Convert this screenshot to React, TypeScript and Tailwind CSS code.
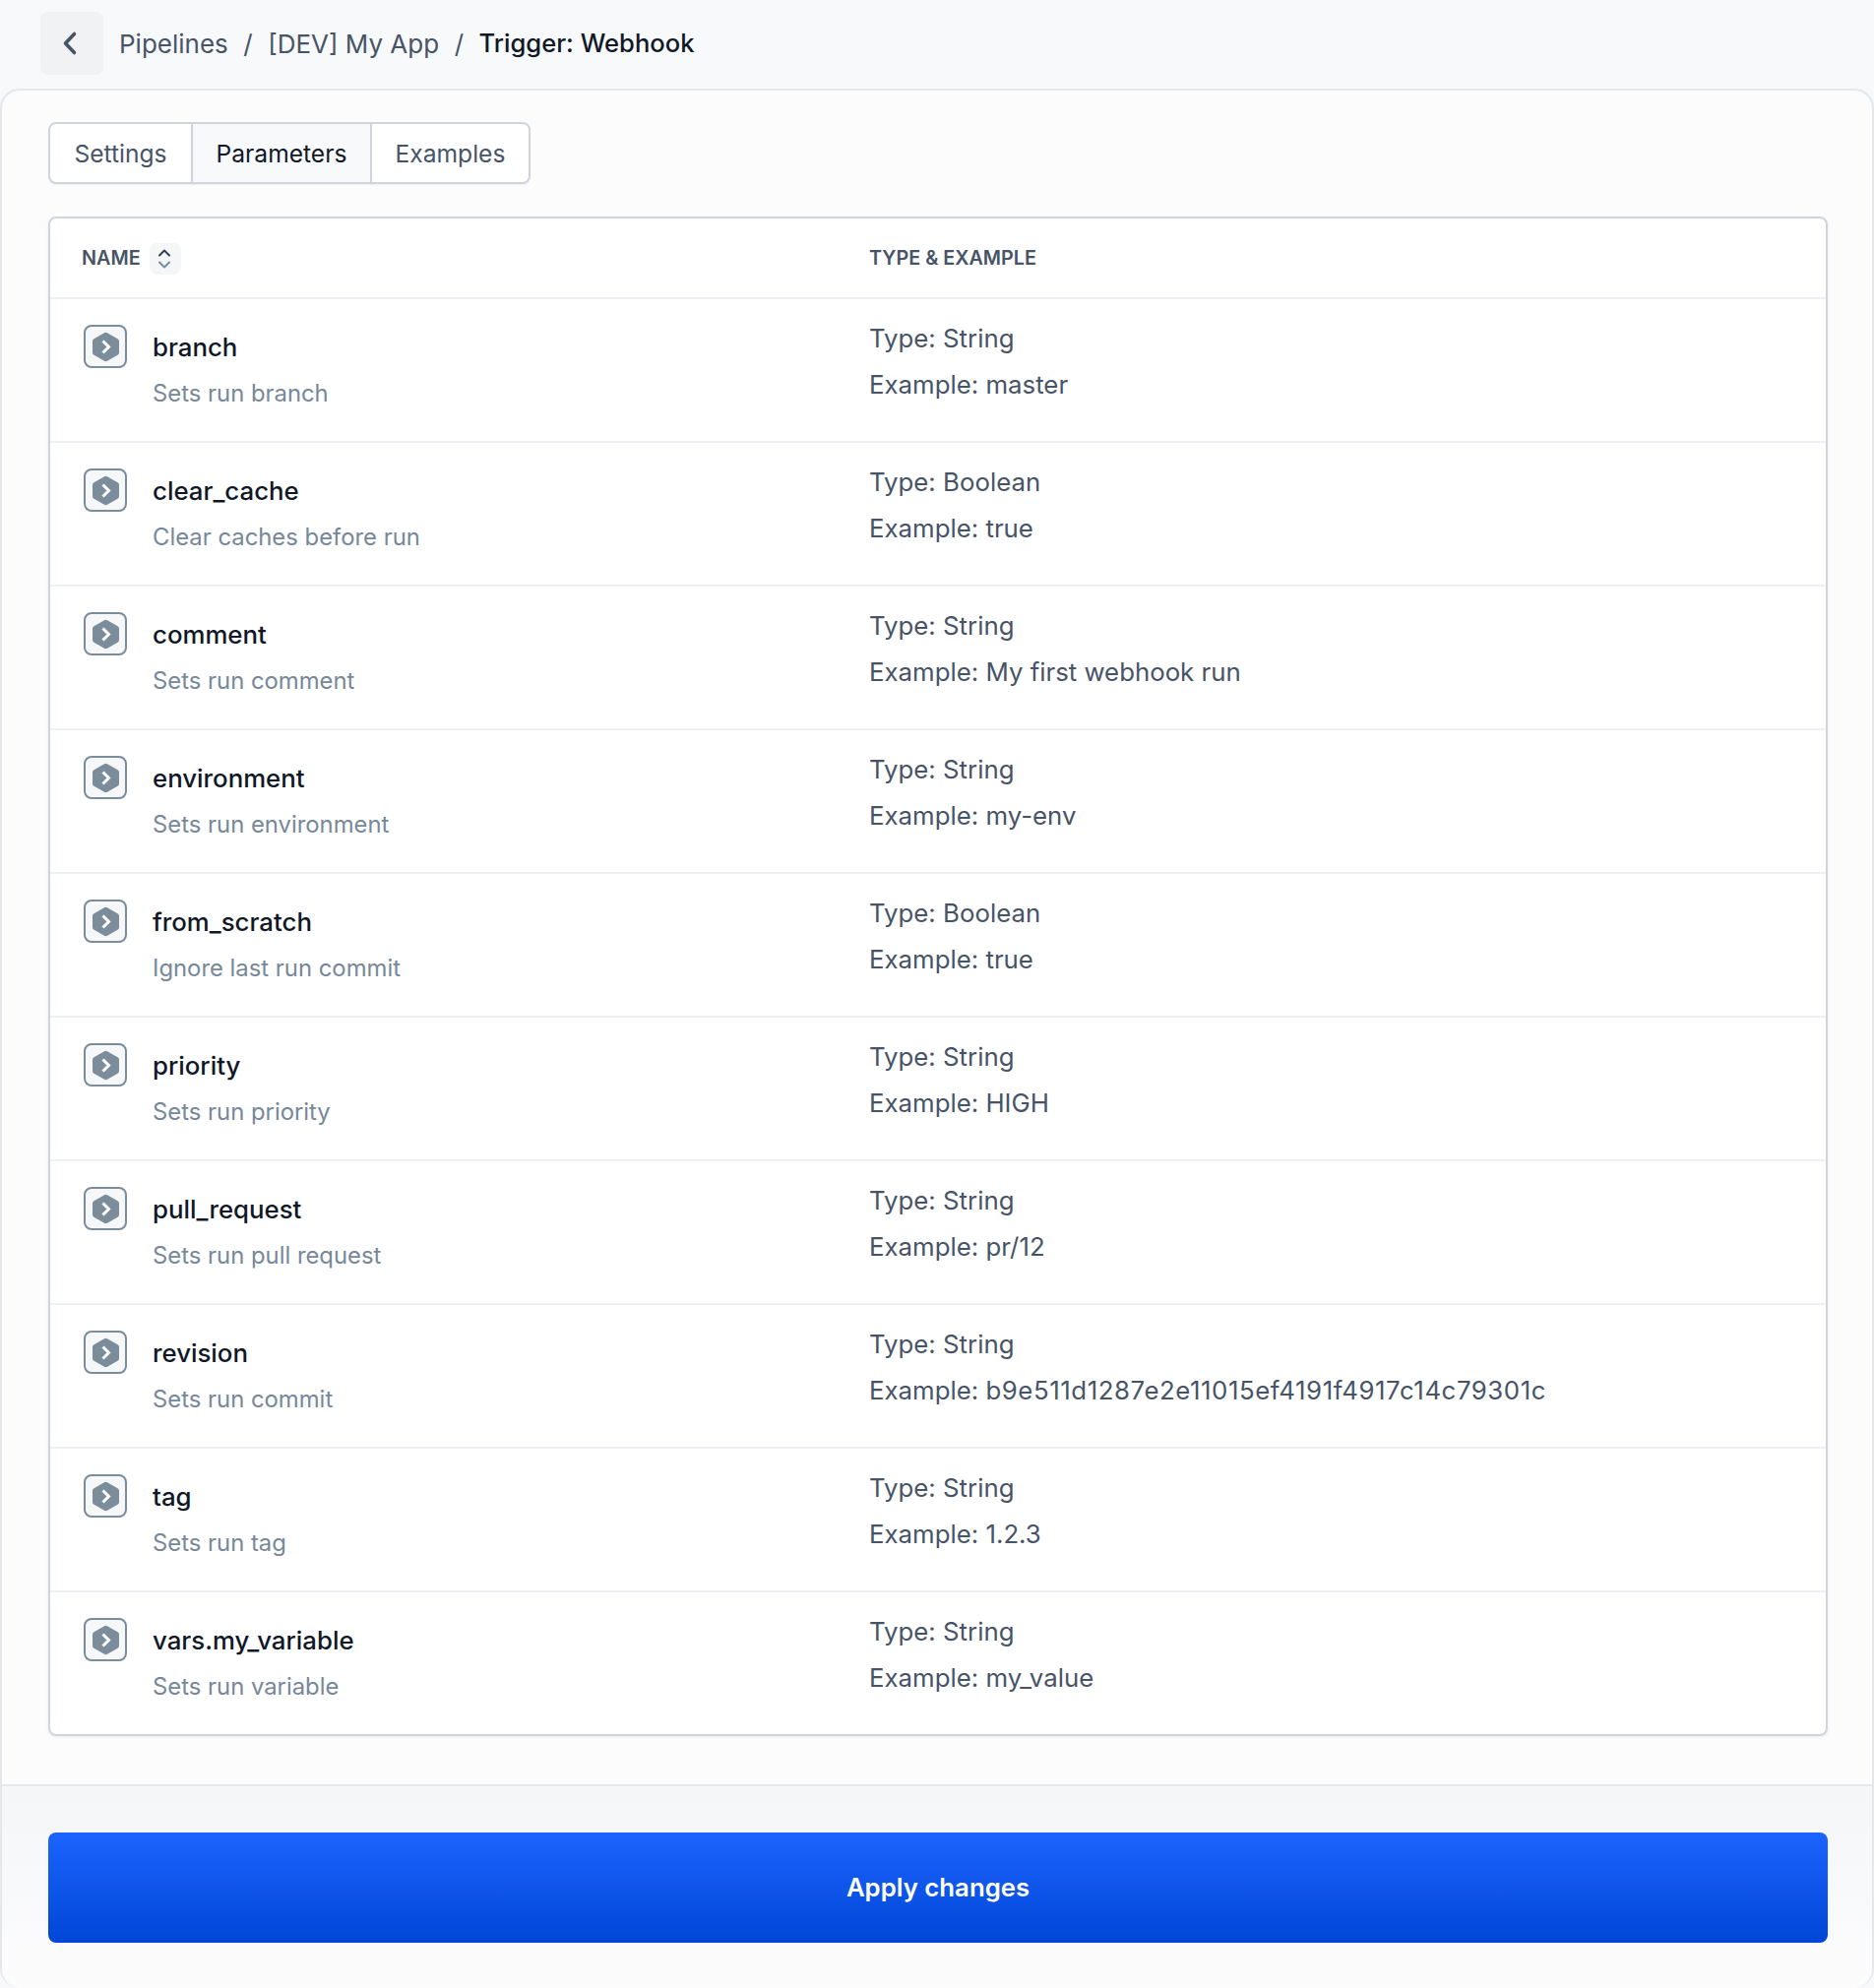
const params = [
  { name: "branch", desc: "Sets run branch", type: "String", example: "master" },
  { name: "clear_cache", desc: "Clear caches before run", type: "Boolean", example: "true" },
  { name: "comment", desc: "Sets run comment", type: "String", example: "My first webhook run" },
  { name: "environment", desc: "Sets run environment", type: "String", example: "my-env" },
  { name: "from_scratch", desc: "Ignore last run commit", type: "Boolean", example: "true" },
  { name: "priority", desc: "Sets run priority", type: "String", example: "HIGH" },
  { name: "pull_request", desc: "Sets run pull request", type: "String", example: "pr/12" },
  { name: "revision", desc: "Sets run commit", type: "String", example: "b9e511d1287e2e11015ef4191f4917c14c79301c" },
  { name: "tag", desc: "Sets run tag", type: "String", example: "1.2.3" },
  { name: "vars.my_variable", desc: "Sets run variable", type: "String", example: "my_value" },
];

function ParamIcon() {
  return (
    <div className="flex h-[44px] w-[44px] items-center justify-center rounded-lg border-2 border-[#7b8c9b] bg-[#f5f7f9]">
      <svg width="29" height="31" viewBox="0 0 29 31" fill="none">
        <path d="M13 1.2a3 3 0 0 1 3 0l10.5 6a3 3 0 0 1 1.5 2.6v11.4a3 3 0 0 1-1.5 2.6l-10.5 6a3 3 0 0 1-3 0l-10.5-6A3 3 0 0 1 1 21.2V9.8a3 3 0 0 1 1.500-2.600z" fill="#7b8c9b" />
        <path d="M11.500 9.500l6 6-6 6" stroke="#fff" strokeWidth="3" />
      </svg>
    </div>
  );
}

export default function App() {
  return (
    <div className="h-[2020px] bg-[#f8f9fb] font-['Inter',sans-serif] text-[#475467]">
      {/* breadcrumbs */}
      <header className="flex h-[90px] items-start pl-[41px] pt-3 text-[26px]">
        <button className="flex h-16 w-16 items-center justify-center rounded-lg bg-[#f0f2f4]">
          <svg width="20" height="26" viewBox="0 0 20 26" fill="none" className="-ml-1">
            <path d="M14.500 3.500l-9 9.500 9 9.500" stroke="#475467" strokeWidth="3.600" strokeLinecap="round" strokeLinejoin="round" />
          </svg>
        </button>
        <nav className="ml-4 flex h-16 items-center pt-px">
          <span>Pipelines</span>
          <span className="mx-[15.5px]">/</span>
          <span>[DEV] My App</span>
          <span className="mx-[15.5px]">/</span>
          <span className="text-[25.6px] font-medium text-[#101828]">Trigger: Webhook</span>
        </nav>
      </header>

      <main className="flex h-[1930px] flex-col rounded-[20px] border-2 border-b-0 border-[#e4e7ec] bg-[#fcfcfd]">
        <div className="flex-1 px-[47px] pt-8">
          <div className="flex h-[63px] w-[490px] overflow-hidden rounded-lg border-2 border-[#d0d5dd] bg-white text-[24.6px] shadow-[0_1px_2px_rgba(16,24,40,0.06)]">
            <div className="flex w-[143px] items-center justify-center pt-px">Settings</div>
            <div className="flex w-[184px] items-center justify-center border-x-2 border-[#d0d5dd] bg-[#f8f9fb] pt-px text-[#101828]">Parameters</div>
            <div className="flex flex-1 items-center justify-center pt-px">Examples</div>
          </div>

          <div className="mt-[33px] w-[1808px] rounded-lg border-2 border-[#d0d5dd] bg-white shadow-[0_1px_3px_rgba(16,24,40,0.08)]">
            <div className="grid h-[80px] grid-cols-[832px_1fr] items-center pt-px text-[19.800px] font-semibold">
              <div className="flex items-center pl-8">
                NAME
                <span className="ml-[9px] flex h-8 w-8 items-center justify-center rounded-lg bg-[#f5f6f8]">
                  <svg width="14" height="20" viewBox="0 0 14 20" fill="none" className="-ml-px">
                    <path d="M2 6.500l5-5 5 5" stroke="#344054" strokeWidth="2" strokeLinecap="round" strokeLinejoin="round" />
                    <path d="M2 13.500l5 5 5-5" stroke="#7b8c9b" strokeWidth="2" strokeLinecap="round" strokeLinejoin="round" />
                  </svg>
                </span>
              </div>
              <div>TYPE &amp; EXAMPLE</div>
            </div>
            {params.map((p) => (
              <div key={p.name} className="grid h-[146px] grid-cols-[832px_1fr] border-t-2 border-[#eef0f3] text-[25.8px] leading-[47px]">
                <div className="flex pl-[34px] pt-[26px]">
                  <ParamIcon />
                  <div className="ml-[26px] -mt-px">
                    <div className="font-medium text-[#101828]">{p.name}</div>
                    <div className="text-[23.85px] text-[#76889a]">{p.desc}</div>
                  </div>
                </div>
                <div className="pt-[16px]">
                  <div>Type: {p.type}</div>
                  <div>
                    Example: <span className={p.name === "revision" ? "tracking-[0.56px]" : ""}>{p.example}</span>
                  </div>
                </div>
              </div>
            ))}
          </div>
        </div>

        <footer className="h-[207px] rounded-b-[20px] border-t-2 border-[#e4e7ec] bg-gradient-to-b from-[#f5f6f8] to-[#fcfcfd] px-[47px] pt-[47px]">
          <button className="flex h-[112px] w-[1808px] items-center justify-center rounded-lg bg-gradient-to-b from-[#1c64ff] to-[#0046d6] text-[25.76px] font-semibold text-white">
            Apply changes
          </button>
        </footer>
      </main>
    </div>
  );
}
